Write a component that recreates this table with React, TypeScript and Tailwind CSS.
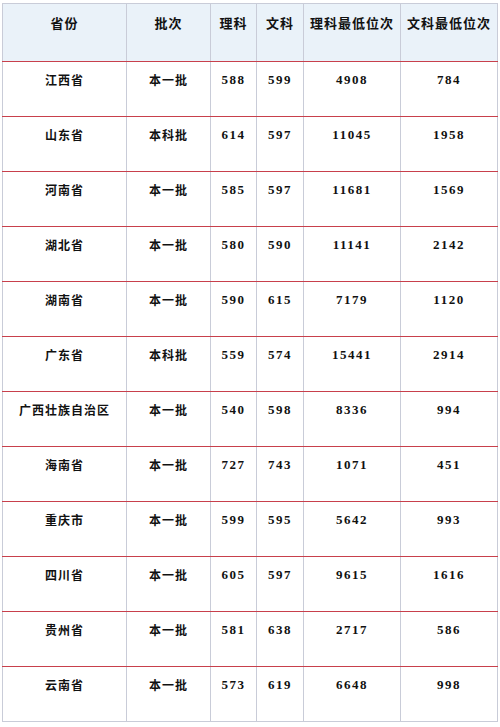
import React from "react";

const rows: [string, string, string, string, string, string][] = [
  ["江西省", "本一批", "588", "599", "4908", "784"],
  ["山东省", "本科批", "614", "597", "11045", "1958"],
  ["河南省", "本一批", "585", "597", "11681", "1569"],
  ["湖北省", "本一批", "580", "590", "11141", "2142"],
  ["湖南省", "本一批", "590", "615", "7179", "1120"],
  ["广东省", "本科批", "559", "574", "15441", "2914"],
  ["广西壮族自治区", "本一批", "540", "598", "8336", "994"],
  ["海南省", "本一批", "727", "743", "1071", "451"],
  ["重庆市", "本一批", "599", "595", "5642", "993"],
  ["四川省", "本一批", "605", "597", "9615", "1616"],
  ["贵州省", "本一批", "581", "638", "2717", "586"],
  ["云南省", "本一批", "573", "619", "6648", "998"],
];

const headers = ["省份", "批次", "理科", "文科", "理科最低位次", "文科最低位次"];
const widths = ["w-[124px]", "w-[84px]", "w-[46px]", "w-[47px]", "w-[97px]", "w-[97px]"];

const font = {
  fontFamily: '"Liberation Serif", "Noto Serif CJK SC", "Noto Sans CJK SC", serif',
};

export default function App() {
  return (
    <div className="w-[500px] h-[727px] bg-white pt-[3px] pl-[2px]" style={font}>
      <table className="table-fixed border-collapse w-[496px] border border-[#c9ccd8] text-[#111] font-bold">
        <colgroup>
          {widths.map((w, i) => (
            <col key={i} className={w} />
          ))}
        </colgroup>
        <thead>
          <tr className="h-[58px] bg-[#eaf2f9]">
            {headers.map((h) => (
              <th
                key={h}
                className="align-top pt-[11px] text-[13px] leading-[16px] tracking-[1px] font-bold border-x border-[#c9ccd8] border-b border-b-[#c8404c]"
                style={{ fontFamily: '"Noto Sans CJK SC", sans-serif' }}
              >
                {h}
              </th>
            ))}
          </tr>
        </thead>
        <tbody>
          {rows.map((r, ri) => (
            <tr key={ri} className="h-[55px]">
              {r.map((c, ci) => (
                <td
                  key={ci}
                  className={`align-top pt-[10px] text-center leading-[16px] border-x border-[#c9ccd8] ${
                    ri < rows.length - 1 ? "border-b border-b-[#c8404c]" : ""
                  } ${ci < 2 ? "text-[12px] tracking-[1px]" : "text-[13px] tracking-[1.5px]"}`}
                  style={
                    ci < 2
                      ? { fontFamily: '"Noto Sans CJK SC", sans-serif', fontWeight: 700 }
                      : undefined
                  }
                >
                  {c}
                </td>
              ))}
            </tr>
          ))}
        </tbody>
      </table>
    </div>
  );
}
